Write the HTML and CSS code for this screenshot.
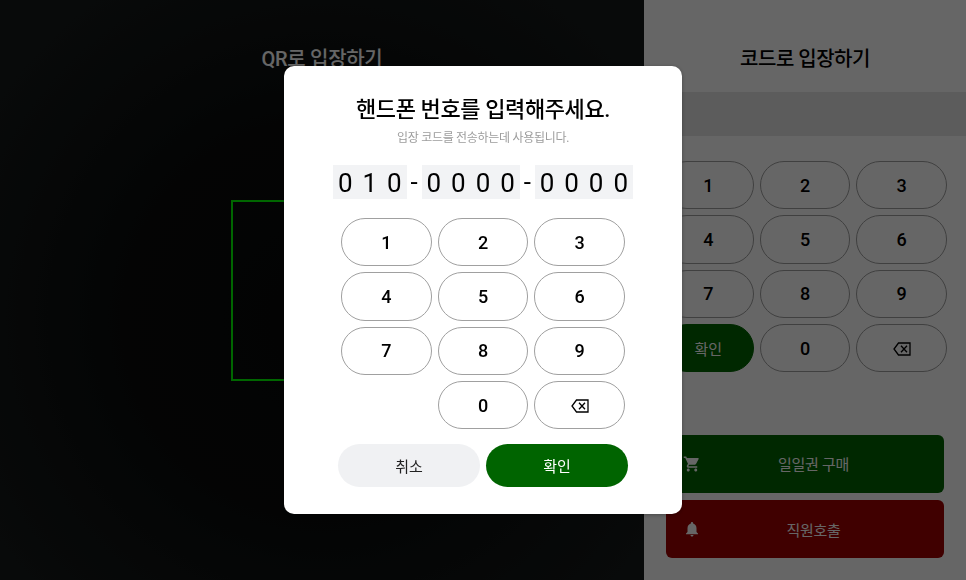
FILE: index.html
```html
<!DOCTYPE html>
<html lang="ko">
<head>
<meta charset="utf-8">
<title>입장하기</title>
<link rel="stylesheet" href="styles.css">
</head>
<body>
<div class="page">
  <section class="qr">
    <h2 class="qr-title">QR로 입장하기</h2>
    <div class="scan-box"></div>
  </section>
  <section class="code">
    <h2 class="code-title">코드로 입장하기</h2>
    <div class="code-strip"></div>
    <div class="keypad code-keypad">
      <button class="key">1</button><button class="key">2</button><button class="key">3</button>
      <button class="key">4</button><button class="key">5</button><button class="key">6</button>
      <button class="key">7</button><button class="key">8</button><button class="key">9</button>
      <button class="key key-ok">확인</button><button class="key">0</button>
      <button class="key"><svg class="bs" viewBox="0 0 18 14"><path d="M5.5 1H17V13H5.500L1 7Z" fill="none" stroke="currentColor" stroke-width="1.300"/><path d="M8 3.800L14 10.200M14 3.800L8 10.200" fill="none" stroke="currentColor" stroke-width="1.300"/></svg></button>
    </div>
    <div class="actions">
      <button class="action action-buy">
        <svg class="action-icon" viewBox="0 0 24 24"><path d="M7 18c-1.100 0-1.990.9-1.990 2S5.900 22 7 22s2-.9 2-2-.9-2-2-2zM1 2v2h2l3.600 7.590-1.350 2.450c-.16.280-.25.610-.25.960 0 1.100.9 2 2 2h12v-2H7.420c-.14 0-.25-.11-.25-.25l.03-.12.9-1.630h7.450c.75 0 1.410-.41 1.750-1.030l3.580-6.490c.08-.14.12-.31.12-.48 0-.55-.45-1-1-1H5.210l-.94-2H1zm16 16c-1.100 0-1.990.9-1.990 2s.89 2 1.990 2 2-.9 2-2-.9-2-2-2z"/></svg>
        <span class="action-label">일일권 구매</span>
      </button>
      <button class="action action-call">
        <svg class="action-icon" viewBox="0 0 24 24"><path d="M12 22c1.100 0 2-.9 2-2h-4c0 1.100.89 2 2 2zm6-6v-5c0-3.070-1.640-5.640-4.500-6.320V4c0-.83-.67-1.500-1.500-1.500s-1.500.67-1.500 1.500v.68C7.630 5.360 6 7.920 6 11v5l-2 2v1h16v-1l-2-2z"/></svg>
        <span class="action-label">직원호출</span>
      </button>
    </div>
  </section>
</div>
<div class="overlay">
  <div class="dialog">
    <h1 class="dialog-title">핸드폰 번호를 입력해주세요.</h1>
    <p class="dialog-sub">입장 코드를 전송하는데 사용됩니다.</p>
    <div class="phone">
      <div class="seg"><span>0</span><span>1</span><span>0</span></div>
      <span class="dash">-</span>
      <div class="seg"><span>0</span><span>0</span><span>0</span><span>0</span></div>
      <span class="dash">-</span>
      <div class="seg"><span>0</span><span>0</span><span>0</span><span>0</span></div>
    </div>
    <div class="keypad dialog-keypad">
      <button class="key">1</button><button class="key">2</button><button class="key">3</button>
      <button class="key">4</button><button class="key">5</button><button class="key">6</button>
      <button class="key">7</button><button class="key">8</button><button class="key">9</button>
      <span></span><button class="key">0</button>
      <button class="key"><svg class="bs" viewBox="0 0 18 14"><path d="M5.5 1H17V13H5.500L1 7Z" fill="none" stroke="currentColor" stroke-width="1.300"/><path d="M8 3.800L14 10.200M14 3.800L8 10.200" fill="none" stroke="currentColor" stroke-width="1.300"/></svg></button>
    </div>
    <div class="dialog-actions">
      <button class="pill pill-cancel">취소</button>
      <button class="pill pill-ok">확인</button>
    </div>
  </div>
</div>
</body>
</html>
```
FILE: styles.css
```css
* { box-sizing: border-box; }
html, body { margin: 0; height: 100%; overflow: hidden; }
body { font-family: Roboto, "Noto Sans CJK KR", sans-serif; color: #000; }
button { font-family: inherit; padding: 0; cursor: pointer; }
h1, h2, p { margin: 0; }

.page { display: flex; width: 966px; height: 580px; }

.qr {
  width: 644px;
  display: flex;
  flex-direction: column;
  align-items: center;
  background: radial-gradient(circle at 50% 55%, #080808 0, #0a0c0c 200px, #161b1b 420px);
  color: #fff;
}
.qr-title, .code-title {
  font: 500 20px/30px Roboto, "Noto Sans CJK KR", sans-serif;
  text-align: center;
  padding-top: 44px;
}
.qr-title { letter-spacing: -.3px; }
.code-title { letter-spacing: -.5px; height: 92px; }
.scan-box {
  width: 182px;
  height: 181px;
  margin-top: 126px;
  border: 2px solid #00ff00;
}

.code {
  width: 322px;
  background: #fff;
  display: flex;
  flex-direction: column;
}
.code-strip { height: 44px; background: #e6e6e6; }

.keypad { display: grid; grid-template-columns: repeat(3, 1fr); gap: 6px; width: 284px; grid-auto-rows: 48.330px; }
.code-keypad { margin: 25px 0 0 19px; }
.dialog-keypad { margin-top: 19px; }

.key {
  display: flex;
  align-items: center;
  justify-content: center;
  background: #fff;
  color: #000;
  border: 1px solid #a0a0a0;
  border-radius: 24px;
  font-size: 18px;
  font-weight: 500;
}
.key-ok { background: #006400; border-color: #006400; color: #fff; font-size: 15px; font-weight: 400; }
.bs { width: 18px; height: 14px; display: block; margin-top: 1px; }

.actions { display: flex; flex-direction: column; gap: 7.500px; padding: 62.670px 22px 0; }
.action {
  display: flex;
  align-items: center;
  height: 58px;
  padding: 0 18px 0 17px;
  border: 0;
  border-radius: 6px;
  color: #fff;
  font-size: 15px;
  letter-spacing: -.3px;
}
.action-buy { background: #006400; }
.action-call { background: #a00000; }
.action-icon { width: 18px; height: 18px; fill: currentColor; flex: none; }
.action-label { flex: 1; text-align: center; }

.overlay {
  position: fixed;
  inset: 0;
  display: flex;
  align-items: center;
  justify-content: center;
  background: rgba(0, 0, 0, .6);
}
.dialog {
  width: 398px;
  height: 448px;
  background: #fff;
  border-radius: 10px;
  box-shadow: 0 1px 4px rgba(0, 0, 0, .3);
  display: flex;
  flex-direction: column;
  align-items: center;
  padding-top: 28px;
}
.dialog-title { font: 500 22px/32px Roboto, "Noto Sans CJK KR", sans-serif; letter-spacing: -.4px; }
.dialog-sub { font-size: 12px; line-height: 20px; color: #9c9c9c; margin-top: 2px; letter-spacing: -.3px; }

.phone { display: flex; align-items: center; margin-top: 17px; height: 34px; }
.seg { display: flex; height: 34px; background: #f2f3f5; }
.seg span { width: 24.600px; text-align: center; font-size: 26px; line-height: 36px; }
.dash { width: 14.800px; text-align: center; font-size: 26px; line-height: 34px; }

.dialog-actions { display: flex; gap: 6px; margin-top: 14.500px; }
.pill { width: 142px; height: 43px; border: 0; border-radius: 22px; font-size: 15px; }
.pill-cancel { background: #f0f1f3; color: #222; }
.pill-ok { background: #006400; color: #fff; }
```
